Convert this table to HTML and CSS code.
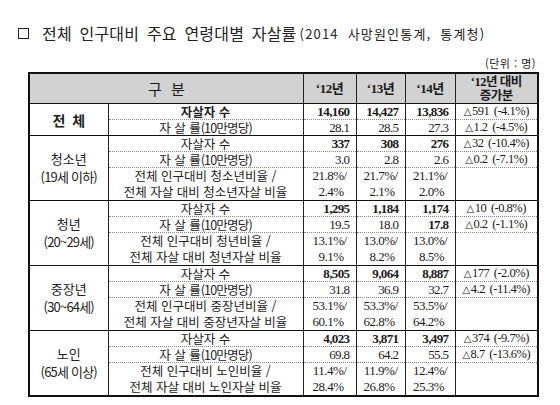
FILE: index.html
```html
<!DOCTYPE html>
<html lang="ko">
<head>
<meta charset="utf-8">
<link rel="stylesheet" href="styles.css">
</head>
<body>
<div class="page">
  <h1 class="title"><span class="box"></span><span class="main">전체 인구대비 주요 연령대별 자살률</span><span class="src">(2014 사망원인통계, 통계청)</span></h1>
  <div class="unit">(단위 : 명)</div>
  <table class="stats">
    <colgroup>
      <col class="c-cat"><col class="c-item"><col class="c-y1"><col class="c-y2"><col class="c-y3"><col class="c-chg">
    </colgroup>
    <thead>
      <tr>
        <th colspan="2" class="h-gubun">구 분</th>
        <th>‘12년</th><th>‘13년</th><th>‘14년</th>
        <th class="h-chg"><div class="hl">‘12년 대비</div><div class="hl">증가분</div></th>
      </tr>
    </thead>
    <tbody>
      <tr class="g r1">
        <td rowspan="2" class="cat cat-all">전 체</td>
        <td class="item b">자살자 수</td>
        <td class="num b">14,160</td><td class="num b">14,427</td><td class="num b">13,836</td>
        <td class="chg"><span class="tri">△</span>591 (-4.1%)</td>
      </tr>
      <tr class="r1 d">
        <td class="item">자 살 률<span class="cn">(10만명당)</span></td>
        <td class="num">28.1</td><td class="num">28.5</td><td class="num">27.3</td>
        <td class="chg"><span class="tri">△</span>1.2 (-4.5%)</td>
      </tr>

      <tr class="g r1">
        <td rowspan="3" class="cat">청소년<br><span class="cn">(19세 이하)</span></td>
        <td class="item">자살자 수</td>
        <td class="num b">337</td><td class="num b">308</td><td class="num b">276</td>
        <td class="chg"><span class="tri">△</span>32 (-10.4%)</td>
      </tr>
      <tr class="r1 d">
        <td class="item">자 살 률<span class="cn">(10만명당)</span></td>
        <td class="num">3.0</td><td class="num">2.8</td><td class="num">2.6</td>
        <td class="chg"><span class="tri">△</span>0.2 (-7.1%)</td>
      </tr>
      <tr class="r2 d">
        <td class="item"><div class="ln">전체 인구대비 청소년비율 /</div><div class="ln">전체 자살 대비 청소년자살 비율</div></td>
        <td class="pct"><span class="pw"><span class="l1">21.8%/</span><span class="l2">2.4%</span></span></td>
        <td class="pct"><span class="pw"><span class="l1">21.7%/</span><span class="l2">2.1%</span></span></td>
        <td class="pct"><span class="pw"><span class="l1">21.1%/</span><span class="l2">2.0%</span></span></td>
        <td class="chg"></td>
      </tr>

      <tr class="g r1">
        <td rowspan="3" class="cat">청년<br><span class="cn">(20~29세)</span></td>
        <td class="item">자살자 수</td>
        <td class="num b">1,295</td><td class="num b">1,184</td><td class="num b">1,174</td>
        <td class="chg"><span class="tri">△</span>10 (-0.8%)</td>
      </tr>
      <tr class="r1 d">
        <td class="item">자 살 률<span class="cn">(10만명당)</span></td>
        <td class="num">19.5</td><td class="num">18.0</td><td class="num b">17.8</td>
        <td class="chg"><span class="tri">△</span>0.2 (-1.1%)</td>
      </tr>
      <tr class="r2 d">
        <td class="item"><div class="ln">전체 인구대비 청년비율 /</div><div class="ln">전체 자살 대비 청년자살 비율</div></td>
        <td class="pct"><span class="pw"><span class="l1">13.1%/</span><span class="l2">9.1%</span></span></td>
        <td class="pct"><span class="pw"><span class="l1">13.0%/</span><span class="l2">8.2%</span></span></td>
        <td class="pct"><span class="pw"><span class="l1">13.0%/</span><span class="l2">8.5%</span></span></td>
        <td class="chg"></td>
      </tr>

      <tr class="g r1">
        <td rowspan="3" class="cat">중장년<br><span class="cn">(30~64세)</span></td>
        <td class="item">자살자 수</td>
        <td class="num b">8,505</td><td class="num b">9,064</td><td class="num b">8,887</td>
        <td class="chg"><span class="tri">△</span>177 (-2.0%)</td>
      </tr>
      <tr class="r1 d">
        <td class="item">자 살 률<span class="cn">(10만명당)</span></td>
        <td class="num">31.8</td><td class="num">36.9</td><td class="num">32.7</td>
        <td class="chg"><span class="tri">△</span>4.2 (-11.4%)</td>
      </tr>
      <tr class="r2 d">
        <td class="item"><div class="ln">전체 인구대비 중장년비율 /</div><div class="ln">전체 자살 대비 중장년자살 비율</div></td>
        <td class="pct"><span class="pw"><span class="l1">53.1%/</span><span class="l2">60.1%</span></span></td>
        <td class="pct"><span class="pw"><span class="l1">53.3%/</span><span class="l2">62.8%</span></span></td>
        <td class="pct"><span class="pw"><span class="l1">53.5%/</span><span class="l2">64.2%</span></span></td>
        <td class="chg"></td>
      </tr>

      <tr class="g r1">
        <td rowspan="3" class="cat">노인<br><span class="cn">(65세 이상)</span></td>
        <td class="item">자살자 수</td>
        <td class="num b">4,023</td><td class="num b">3,871</td><td class="num b">3,497</td>
        <td class="chg"><span class="tri">△</span>374 (-9.7%)</td>
      </tr>
      <tr class="r1 d">
        <td class="item">자 살 률<span class="cn">(10만명당)</span></td>
        <td class="num">69.8</td><td class="num">64.2</td><td class="num">55.5</td>
        <td class="chg"><span class="tri">△</span>8.7 (-13.6%)</td>
      </tr>
      <tr class="r2 d">
        <td class="item"><div class="ln">전체 인구대비 노인비율 /</div><div class="ln">전체 자살 대비 노인자살 비율</div></td>
        <td class="pct"><span class="pw"><span class="l1">11.4%/</span><span class="l2">28.4%</span></span></td>
        <td class="pct"><span class="pw"><span class="l1">11.9%/</span><span class="l2">26.8%</span></span></td>
        <td class="pct"><span class="pw"><span class="l1">12.4%/</span><span class="l2">25.3%</span></span></td>
        <td class="chg"></td>
      </tr>
    </tbody>
  </table>
</div>
</body>
</html>
```

FILE: styles.css
```css
html, body {
  margin: 0;
  padding: 0;
  background: #fff;
}
body {
  font-family: "Noto Sans CJK KR", "Noto Sans", sans-serif;
  color: #1a1a1a;
}
.page {
  width: 560px;
  height: 405px;
  padding: 22px 0 0 0;
  box-sizing: border-box;
}
.title {
  margin: 0 0 0 18px;
  font-weight: 400;
  display: flex;
  align-items: center;
  height: 22px;
  white-space: nowrap;
}
.box {
  display: inline-block;
  width: 9px;
  height: 9px;
  border: 1px solid #222;
  margin-right: 13px;
}
.main {
  font-size: 16px;
  letter-spacing: 0.2px;
  word-spacing: 3px;
  color: #222;
}
.src {
  font-size: 13px;
  margin-left: 3px;
  letter-spacing: 1.2px;
  word-spacing: 4px;
  color: #222;
}
.unit {
  width: 536px;
  text-align: right;
  font-size: 11px;
  line-height: 14px;
  margin-top: 12px;
  letter-spacing: 0.5px;
  color: #222;
}
.stats {
  margin-left: 28px;
  margin-top: 2px;
  border-collapse: collapse;
  table-layout: fixed;
  width: 509px;
  border: 2px solid #111;
}
.c-cat { width: 79px; }
.c-item { width: 195px; }
.c-y1 { width: 53px; }
.c-y2 { width: 49px; }
.c-y3 { width: 50px; }
.c-chg { width: 83px; }

.stats th, .stats td {
  border-left: 1px solid #222;
  border-right: 1px solid #222;
  padding: 0;
  overflow: hidden;
  white-space: nowrap;
}
.stats thead th {
  background: #d2d2d2;
  height: 29px;
  border-bottom: 1px solid #111;
  font-family: "Liberation Serif", "Noto Sans CJK KR", serif;
  font-weight: 700;
  font-size: 13px;
  letter-spacing: -0.5px;
  text-align: center;
  line-height: 13px;
}
.stats thead th.h-gubun {
  font-family: "Noto Sans CJK KR", sans-serif;
  font-weight: 400;
  font-size: 15px;
  word-spacing: 6px;
}
.stats thead th.h-chg {
  font-size: 12.5px;
}
.hl {
  height: 14px;
  line-height: 14px;
}
tr.r1 { height: 16px; }
tr.r2 { height: 33px; }
tr.g td { border-top: 1px solid #111; }
tr.d td { border-top: 1px dotted #8a8a8a; }

.stats td.cat {
  text-align: center;
  font-size: 13px;
  line-height: 18px;
  color: #222;
}
.stats td.cat-all {
  font-weight: 700;
  font-size: 14px;
  word-spacing: 3px;
}
.cn { letter-spacing: -0.8px; }
.stats td.item {
  text-align: center;
  font-size: 12.5px;
  line-height: 15px;
  color: #222;
}
.ln {
  height: 16px;
  line-height: 16px;
}
.stats td.b { font-weight: 700; }
.stats td.num {
  font-family: "Liberation Serif", serif;
  font-size: 13px;
  letter-spacing: -0.6px;
  text-align: right;
  padding-right: 6px;
  line-height: 14px;
}
.stats td.pct {
  font-family: "Liberation Serif", serif;
  font-size: 13px;
  letter-spacing: -0.5px;
  text-align: center;
}
.pw {
  display: inline-flex;
  flex-direction: column;
  align-items: flex-end;
  vertical-align: middle;
}
.l1, .l2 {
  display: block;
  height: 16px;
  line-height: 16px;
}
.l2 {
  padding-right: 3px;
}
.stats td.chg {
  font-family: "Liberation Serif", serif;
  font-size: 12.5px;
  letter-spacing: -0.5px;
  text-align: center;
  line-height: 14px;
  word-spacing: 2px;
}
.tri {
  font-family: "DejaVu Sans", sans-serif;
  font-size: 10px;
  margin-right: 1px;
}
```
